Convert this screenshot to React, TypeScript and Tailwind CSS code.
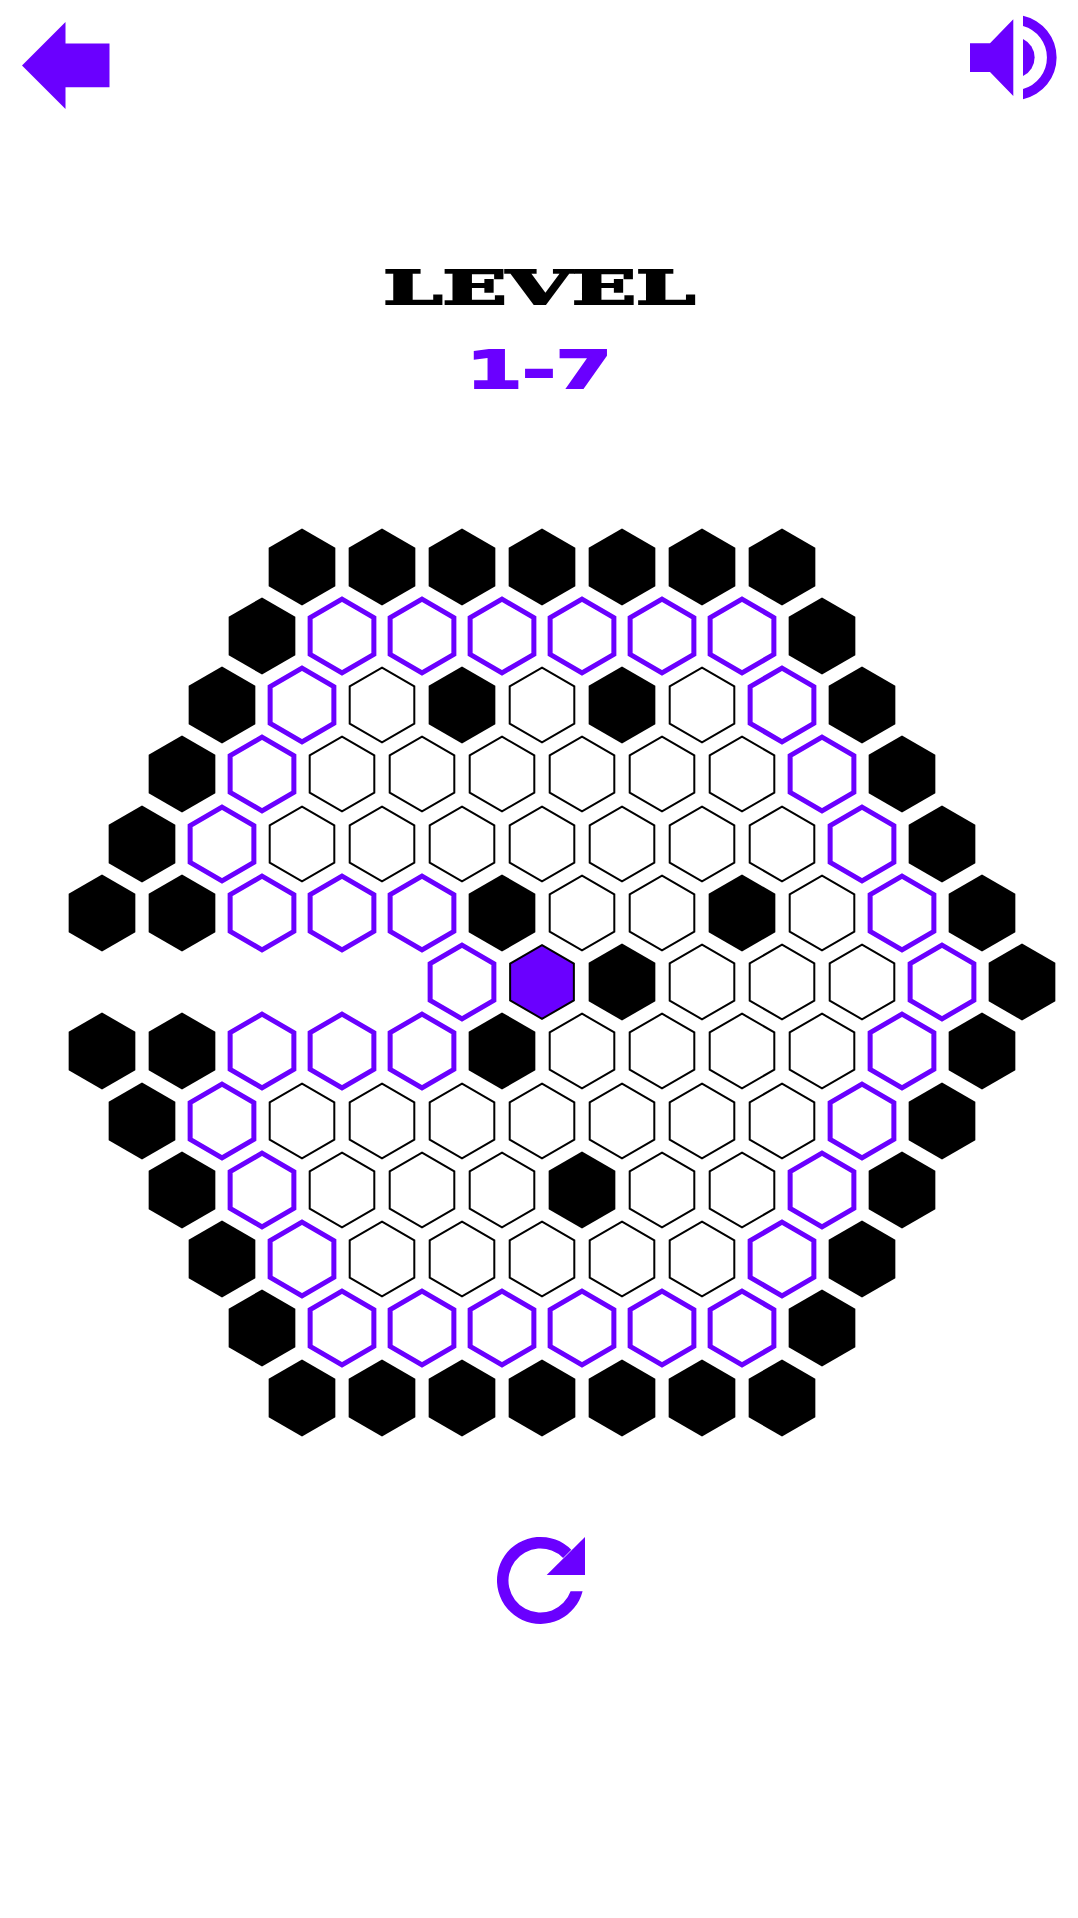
const PURPLE = '#6a00ff';

// k = black, p = purple ring, w = plain, a = current cell, x = gap
const BOARD = [
  'kkkkkkk',
  'kppppppk',
  'kpwkwkwpk',
  'kpwwwwwwpk',
  'kpwwwwwwwpk',
  'kkpppkwwkwpk',
  'xxxxxpakwwwpk',
  'kkpppkwwwwpk',
  'kpwwwwwwwpk',
  'kpwwwkwwpk',
  'kpwwwwwpk',
  'kppppppk',
  'kkkkkkk',
];

const hexPoints = (r: number) => {
  const a = r * 0.866;
  const h = r / 2;
  return `40,${40 - r} ${40 + a},${40 - h} ${40 + a},${40 + h} 40,${40 + r} ${40 - a},${40 + h} ${40 - a},${40 - h}`;
};

function Hex({ type }: { type: string }) {
  if (type === 'x') return <div className="w-20 h-20 shrink-0" />;
  return (
    <svg className="w-20 h-20 shrink-0" viewBox="0 0 80 80">
      {type === 'k' && <polygon points={hexPoints(38.5)} fill="#000" />}
      {type === 'w' && <polygon points={hexPoints(37.3)} fill="#fff" stroke="#000" strokeWidth={2} />}
      {type === 'p' && <polygon points={hexPoints(36.8)} fill="#fff" stroke={PURPLE} strokeWidth={5} />}
      {type === 'a' && <polygon points={hexPoints(36.8)} fill={PURPLE} stroke="#000" strokeWidth={2} />}
    </svg>
  );
}

export default function App() {
  return (
    <div className="w-[1078px] h-[1918px] bg-white overflow-hidden">
      {/* top bar */}
      <div className="flex justify-between h-[130px]">
        <svg className="w-[130px] h-[130px]" viewBox="0 0 130 130">
          <polygon points="22,65.5 65.5,22 65.5,43.5 109.5,43.5 109.5,87.3 65.5,87.3 65.5,109" fill={PURPLE} />
        </svg>
        <svg className="w-[128px] h-[120px]" viewBox="950 0 128 120">
          <polygon points="970,43.3 990,43.3 1013.3,19.3 1013.3,96 990,72 970,72" fill={PURPLE} />
          <path d="M1023 15.7 A42.8 42.8 0 0 1 1023 99.3 V89 A32.7 32.7 0 0 0 1023 26 Z" fill={PURPLE} />
          <path d="M1023 38.9 A20.7 20.7 0 0 1 1023 76.1 Z" fill={PURPLE} />
        </svg>
      </div>

      {/* heading */}
      <div className="mt-[129px] flex flex-col items-center">
        <div className="h-[58px] leading-[58px] text-[46px] font-bold text-black font-['DejaVu_Serif',serif] scale-x-[1.83] [-webkit-text-stroke:2px_#000]">
          LEVEL
        </div>
        <div className="mt-[24px] h-[58px] leading-[58px] text-[52px] font-bold text-[#6a00ff] font-['DejaVu_Sans',sans-serif] scale-x-[1.55] [-webkit-text-stroke:2px_#6a00ff]">
          1-7
        </div>
      </div>

      {/* board */}
      <div className="mt-[133px] ml-[5px] flex flex-col">
        {BOARD.map((row, i) => (
          <div key={i} className="h-[69.25px] flex items-center justify-center">
            {row.split('').map((c, j) => (
              <Hex key={j} type={c} />
            ))}
          </div>
        ))}
      </div>

      {/* restart */}
      <div className="mt-[77px] pl-[2px] flex justify-center">
        <svg className="w-[120px] h-[120px]" viewBox="480 1510 120 120">
          <path
            d="M571.3 1550.7 A43.5 43.5 0 1 0 582.6 1592.3 H570.6 A32 32 0 1 1 563.1 1558.9 Z"
            fill={PURPLE}
          />
          <polygon points="546.7,1576 585,1538 585,1576" fill={PURPLE} />
        </svg>
      </div>
    </div>
  );
}
